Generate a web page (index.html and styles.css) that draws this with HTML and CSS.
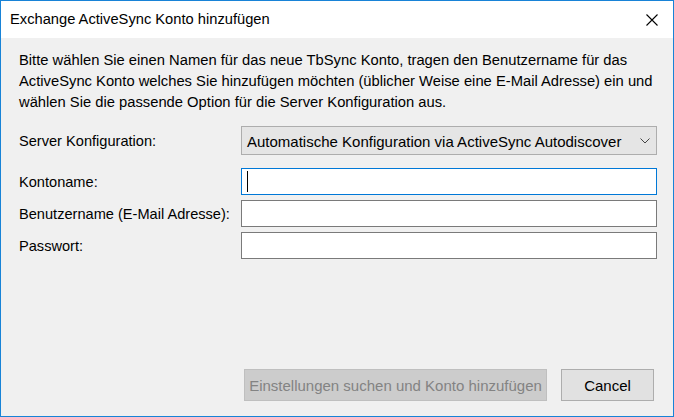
FILE: index.html
```html
<!DOCTYPE html>
<html lang="de">
<head>
<meta charset="utf-8">
<link rel="stylesheet" href="styles.css">
</head>
<body>
<div class="window">
  <div class="titlebar">
    <span class="title">Exchange ActiveSync Konto hinzufügen</span>
    <svg class="close" width="12" height="12" viewBox="0 0 12 12"><path d="M0.5 0.5 L11.5 11.5 M11.5 0.5 L0.5 11.5" stroke="#000" stroke-width="1.1" fill="none"/></svg>
  </div>
  <div class="content">
    <p class="intro">Bitte wählen Sie einen Namen für das neue TbSync Konto, tragen den Benutzername für das ActiveSync Konto welches Sie hinzufügen möchten (üblicher Weise eine E-Mail Adresse) ein und wählen Sie die passende Option für die Server Konfiguration aus.</p>
    <div class="form">
      <label class="lbl lbl-select">Server Konfiguration:</label>
      <div class="select">
        <span>Automatische Konfiguration via ActiveSync Autodiscover</span>
        <svg width="10" height="6" viewBox="0 0 10 6"><path d="M0.5 0.5 L5 5 L9.5 0.5" stroke="#444" stroke-width="1" fill="none"/></svg>
      </div>
      <label class="lbl">Kontoname:</label>
      <div class="input focused"><span class="caret"></span></div>
      <label class="lbl">Benutzername (E-Mail Adresse):</label>
      <div class="input"></div>
      <label class="lbl">Passwort:</label>
      <div class="input"></div>
    </div>
    <div class="buttons">
      <button class="btn disabled">Einstellungen suchen und Konto hinzufügen</button>
      <button class="btn">Cancel</button>
    </div>
  </div>
</div>
</body>
</html>
```

FILE: styles.css
```css
html, body {
  margin: 0;
  padding: 0;
}
body {
  font-family: "Liberation Sans", Arial, sans-serif;
  font-size: 15px;
  color: #000;
  background: #f0f0f0;
}
.window {
  width: 674px;
  height: 417px;
  box-sizing: border-box;
  border: 1px solid #1883d7;
  display: flex;
  flex-direction: column;
  background: #f0f0f0;
}
.titlebar {
  height: 37px;
  background: #fff;
  display: flex;
  align-items: center;
  justify-content: space-between;
  padding: 0 15px 0 9px;
  flex: none;
}
.title {
  font-size: 14.7px;
  position: relative;
  top: -1px;
}
.content {
  flex: 1;
  display: flex;
  flex-direction: column;
  padding: 12px 17px 15px 18px;
}
.intro {
  margin: 0;
  line-height: 21px;
  font-size: 14.75px;
}
.form {
  display: grid;
  grid-template-columns: 222px 1fr;
  row-gap: 5px;
  margin-top: 13px;
  align-items: center;
}
.lbl {
  font-size: 14.6px;
}
.lbl-select {
  margin-bottom: 7px;
}
.select {
  height: 29px;
  box-sizing: border-box;
  border: 1px solid #adadad;
  background: #e5e5e5;
  display: flex;
  align-items: center;
  justify-content: space-between;
  padding: 0 6px 0 5px;
  margin-bottom: 8px;
  margin-right: -1px;
}
.select span {
  font-size: 15px;
  position: relative;
  top: 1px;
}
.input {
  height: 27px;
  box-sizing: border-box;
  border: 1px solid #7a7a7a;
  background: #fff;
  margin-right: -1px;
  display: flex;
  align-items: center;
  padding-left: 5px;
}
.input.focused {
  border-color: #0078d7;
}
.caret {
  width: 1px;
  height: 21px;
  background: #000;
}
.buttons {
  margin-top: auto;
  display: flex;
  justify-content: flex-end;
  gap: 14px;
  padding-right: 2px;
}
.btn {
  font-family: "Liberation Sans", Arial, sans-serif;
  font-size: 15px;
  height: 32px;
  box-sizing: border-box;
  border: 1px solid #adadad;
  background: #e1e1e1;
  color: #000;
  padding: 0;
  width: 93px;
}
.btn.disabled {
  width: 303px;
  background: #cccccc;
  border-color: #bfbfbf;
  color: #838383;
}
```
